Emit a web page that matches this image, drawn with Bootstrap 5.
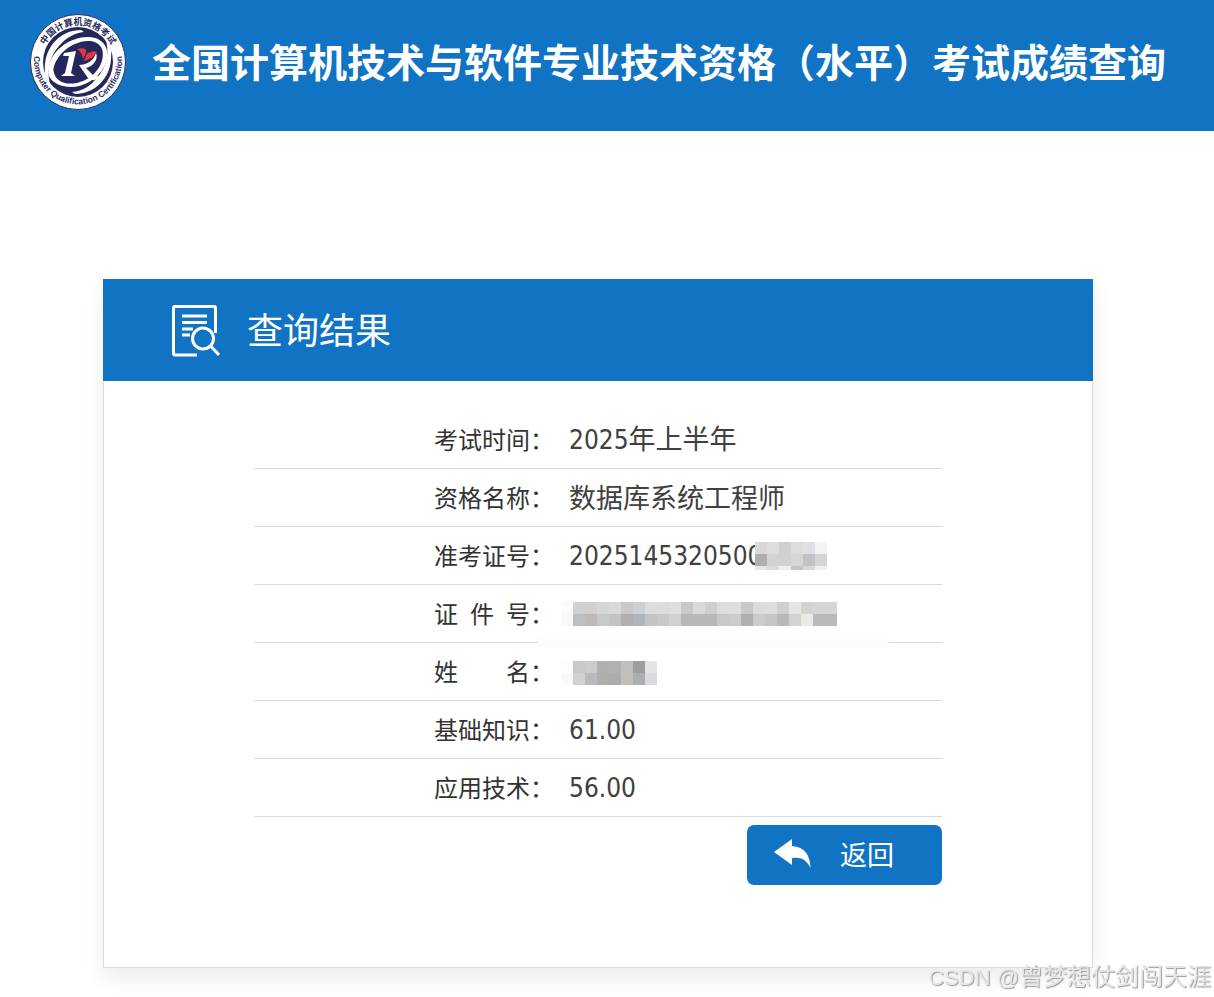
<!DOCTYPE html>
<html lang="zh-CN">
<head>
<meta charset="utf-8">
<meta name="viewport" content="width=device-width, initial-scale=1">
<title>考试成绩查询</title>
<link href="https://cdn.jsdelivr.net/npm/bootstrap@5.3.0/dist/css/bootstrap.min.css" rel="stylesheet">
<style>
:root { --exam-blue: #1073c3; }
body { font-family: "Noto Sans", "Noto Sans CJK SC", sans-serif; color: #404040; }
.exam-blue { background: var(--exam-blue); color: #fff; }
.site-head { padding: 13px 28px 20px; gap: 24px; min-height: 131px; }
.site-head svg { width: 100px; height: 98px; }
.site-title { font: 700 39px/58px "Noto Sans CJK SC", sans-serif; padding-bottom: 4px; }
.page-main { padding: 148px 18px 29px 0; }
.result-panel { max-width: 990px; border: 1px solid #dadada; border-top: 0; border-radius: 0; box-shadow: 0 10px 20px rgba(0,0,0,.08); }
.panel-title { margin: 0 -1px; padding: 0 68px; gap: 27px; height: 102px; }
.panel-title h2 { font: 400 36px/54px "Noto Sans CJK SC", sans-serif; padding-bottom: 4px; }
.panel-content { padding: 29px 150px 82px; }
.score-table { table-layout: fixed; }
.score-table th, .score-table td { height: 58px; padding: 0; border-bottom: 1px solid #dadada; vertical-align: middle; white-space: nowrap; }
.score-table th { width: 300px; text-align: right; font: 400 24px/36px "Noto Sans CJK SC", sans-serif; color: #333; }
.score-table td { position: relative; padding-left: 15px; font: 400 27px/36px "Noto Sans CJK SC", sans-serif; }
.digits { font-family: "DejaVu Sans Condensed", "Noto Sans", sans-serif; font-size: 26px; }
.mosaic { position: absolute; top: 0; left: -16px; z-index: 1; }
.back-btn { --bs-btn-color: #fff; --bs-btn-hover-color: #fff; --bs-btn-bg: var(--exam-blue); --bs-btn-hover-bg: #0e67ae; --bs-btn-border-width: 0; width: 195px; height: 60px; padding: 0 48px 2px 27px; border-radius: 7px; font: 400 27px/40px "Noto Sans CJK SC", sans-serif; }
.watermark { position: fixed; right: 3px; bottom: 1px; font: 400 24px/36px "Liberation Sans", "Noto Sans CJK SC", sans-serif; color: #e6e6e6; text-shadow: 1px 1px 1px #999; }
.watermark span { font-size: 22px; }
</style>
</head>
<body>
<header class="site-head exam-blue d-flex align-items-center">
  <svg class="flex-shrink-0" viewBox="0 0 100 98" role="img" aria-label="计算机资格考试徽标">
    <defs>
      <path id="arcTop" d="M13 49A37 37 0 0 1 87 49"/>
      <path id="arcBottom" d="M7 38A44 44 0 1 0 93 38"/>
    </defs>
    <circle cx="50" cy="49" r="47.5" fill="#fff" stroke="#292a60" stroke-width="1"/>
    <circle cx="50" cy="49" r="35" fill="#25265c"/>
    <g fill="#fff">
      <path fill-rule="evenodd" d="M21 63C17 43 38 24 60 24C78 24 84 40 76 54C68 69 49 77 35 73C27 71 23 67 21 63ZM26 60C29 71 43 73 55 68C70 62 79 45 73 34C66 23 45 28 34 40C28 47 24 54 26 60Z"/>
      <path d="M53 17C33 17 18 33 17 52C16 62 18 69 23 74C18 60 21 44 31 33C38 25 46 20 56 19Z"/>
      <path d="M47 81C66 81 82 66 83 46C84 36 82 30 77 24C82 38 79 54 69 65C62 73 55 78 44 79Z"/>
      <path d="M36 40L48 38L43 60L47 63H33L37 60L41 43L35 43Z"/>
      <path d="M51 52C58 52 66 48 68 40C71 47 64 54 58 55L65 62Q69 65 73 61Q67 71 60 65Z"/>
    </g>
    <path d="M49 36Q56 34 58 37Q59 39 55 46Q54 39 49 36ZM57 46Q59 38 62 40Q65 37 69 39Q64 47 55 48Z" fill="#e33645"/>
    <g fill="#292a60" font-weight="700" text-anchor="middle">
      <text font-family="Noto Sans CJK SC, sans-serif" font-size="9"><textPath href="#arcTop" startOffset="50%">中国计算机资格考试</textPath></text>
      <text font-family="Liberation Sans, sans-serif" font-size="8.500"><textPath href="#arcBottom" startOffset="50%">Computer Qualification Certification</textPath></text>
    </g>
  </svg>
  <h1 class="site-title mb-0">全国计算机技术与软件专业技术资格（水平）考试成绩查询</h1>
</header>
<main class="page-main">
  <section class="result-panel card mx-auto">
    <div class="panel-title exam-blue d-flex align-items-center">
      <svg width="49" height="53" viewBox="0 0 49 53" fill="none" stroke="#fff" stroke-width="3" stroke-linejoin="round" aria-hidden="true">
        <path d="M26 51H4Q2.500 51 2.500 49.500V4Q2.500 2.500 4 2.500H43Q44.500 2.500 44.500 4V29"/>
        <path d="M11 12H36M11 18.500H36M11 25H22M11 31H19"/>
        <circle cx="32" cy="34.500" r="10.500"/><path d="M39.500 42L48 51"/>
      </svg>
      <h2 class="mb-0">查询结果</h2>
    </div>
    <div class="panel-content">
      <table class="score-table w-100 mb-2">
        <tbody>
          <tr><th scope="row">考试时间：</th><td><span class="digits">2025</span>年上半年</td></tr>
          <tr><th scope="row">资格名称：</th><td>数据库系统工程师</td></tr>
          <tr><th scope="row">准考证号：</th><td><span class="digits">2025145320500</span><svg class="mosaic" data-top="15" data-left="217" data-heights="12,12,4" data-colors="d8d8d9 dcdedd cfcfcf dddcdb e0e1e3 f2f3f4|aeaeac d1d3d4 d1d1d2 d9d5d2 c0c2c5 d4d5d7|e5e6e8 dadbdd eeeeee c5c3c2 d8d8d8 eef0ef" width="351" height="63"></svg></td></tr>
          <tr><th scope="row">证&ensp;件&ensp;号：</th><td><svg class="mosaic" data-top="17" data-left="23" data-heights="12,12" data-strip="53" data-colors="fcfbfa cfd1d3 d2d0cf d5d7d6 d8d9d8 cbc9c8 cdd1d5 dddddd dcdcdc e0dfdd cac9c7 d9dadd cfcfcf dddee0 dfdedc c9c9c9 dcdcde dddddd d1cfd1 e6e5e4 d5d2d1 d5d6d8 d5d6d8|faf9f8 bdbfc1 bdbab8 c8c8c8 c3c3c4 b1afad b0b5ba c4c4c5 cac9c7 d2d1cf b7b7b7 b8b8b8 b8b8ba c9c9c7 cbccce afafaf cccccd c5c6ca b9b9b9 d2d2d3 ece8e4 b7b9bd b7b9bd" width="351" height="63"></svg></td></tr>
          <tr><th scope="row">姓&emsp;&emsp;名：</th><td><svg class="mosaic" data-top="18" data-left="23" data-heights="12,12" data-colors="fefdfc c8c8c8 c9cbcd b0afad b1b1b1 bdc0bc 9f9ca0 e3e4e6|f9f9f8 d0d1d3 b9babd b0aeac acacaa c2bfb9 adaeb3 dadbe0" width="351" height="58"></svg></td></tr>
          <tr><th scope="row">基础知识：</th><td><span class="digits">61.00</span></td></tr>
          <tr><th scope="row">应用技术：</th><td><span class="digits">56.00</span></td></tr>
        </tbody>
      </table>
      <div class="d-flex justify-content-end">
        <button type="button" class="back-btn btn d-flex align-items-center justify-content-between">
          <svg width="38" height="30" viewBox="0 0 38 30" fill="#fff" aria-hidden="true"><path d="M0 13L18 0V7C31 8 36 16 36.500 29C32 20 27 18 18 19V26Z"/></svg>
          返回
        </button>
      </div>
    </div>
  </section>
</main>
<div class="watermark"><span>CSDN @</span>曾梦想仗剑闯天涯</div>
<script src="https://cdn.jsdelivr.net/npm/bootstrap@5.3.0/dist/js/bootstrap.bundle.min.js"></script>
<script>
// Fill the privacy mosaics, one 12px tile per colour.
document.querySelectorAll('.mosaic').forEach(svg => {
  const rect = (x, y, w, h, fill) => {
    const r = document.createElementNS('http://www.w3.org/2000/svg', 'rect');
    Object.entries({ x, y, width: w, height: h, fill }).forEach(([k, v]) => r.setAttribute(k, v));
    svg.append(r);
  };
  const heights = svg.dataset.heights.split(',').map(Number);
  const left = Number(svg.dataset.left);
  let y = Number(svg.dataset.top);
  svg.dataset.colors.split('|').forEach((row, i) => {
    row.split(' ').forEach((c, n) => rect(left + n * 12, y, 12, heights[i], '#' + c));
    y += heights[i];
  });
  if (svg.dataset.strip) rect(0, Number(svg.dataset.strip), 351, 10, '#fcfcfc');
});
</script>
</body>
</html>
